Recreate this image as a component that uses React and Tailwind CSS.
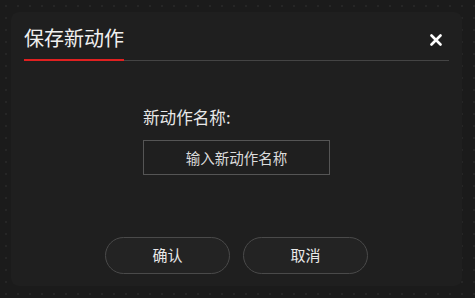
import React from "react";

export default function App() {
  const font = { fontFamily: '"Noto Sans CJK SC", "Noto Sans", sans-serif' };
  return (
    <div
      className="w-[475px] h-[298px] bg-[#1b1b1b] bg-[radial-gradient(#262626_1px,transparent_1px)] bg-[size:12px_12px] pl-[11px] pt-[12px] pr-[13px] pb-[12px]"
      style={font}
    >
      <div className="w-full h-full rounded-[8px] bg-[#1f1f1f] flex flex-col">
        <div className="mx-[13px] pt-[12px] flex items-end justify-between border-b border-[#444]">
          <div className="text-[20px] leading-[28px] text-[#f0f0f0] pb-[7px] border-b-2 border-[#e02020] -mb-px">
            保存新动作
          </div>
          <div className="pb-[14px] pr-[7px] text-white">
            <svg width="12" height="12" viewBox="0 0 12 12">
              <path d="M1.5 1.5 L10.5 10.5 M10.5 1.5 L1.5 10.5" stroke="white" strokeWidth="2.6" strokeLinecap="round" />
            </svg>
          </div>
        </div>
        <div className="flex flex-col items-center pt-[45px]">
          <div className="w-[187px]">
            <div className="text-[16.6px] leading-[22px] text-[#e8e8e8]">新动作名称:</div>
            <div className="mt-[12px] h-[35px] border border-[#555] flex items-center justify-center text-[14.5px] text-[#dcdcdc]">
              输入新动作名称
            </div>
          </div>
        </div>
        <div className="flex-1" />
        <div className="flex justify-center gap-[13px] pb-[12px]">
          <button className="w-[125px] h-[37px] rounded-full border border-[#4a4a4a] bg-[#232323] text-[15px] text-[#e8e8e8]">
            确认
          </button>
          <button className="w-[125px] h-[37px] rounded-full border border-[#4a4a4a] bg-[#232323] text-[15px] text-[#e8e8e8]">
            取消
          </button>
        </div>
      </div>
    </div>
  );
}
